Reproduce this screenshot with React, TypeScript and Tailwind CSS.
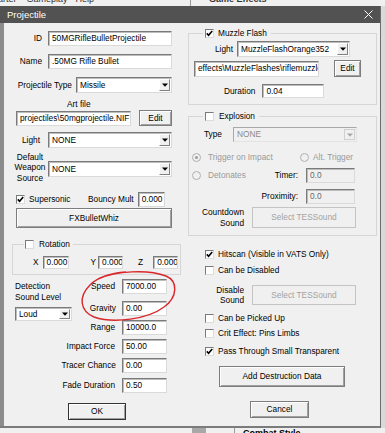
const sunken =
  "bg-white border border-t-[#7a7a7a] border-l-[#7a7a7a] border-r-[#dadada] border-b-[#dadada] shadow-[inset_1px_1px_0_#bdbdbd]";
const sunkenOff =
  "bg-[#f0f0f0] border border-t-[#a8a8a8] border-l-[#a8a8a8] border-r-[#e3e3e3] border-b-[#e3e3e3] text-[#8a8a8a]";
const raised =
  "bg-[#f0f0f0] border border-[#7d7d7d] shadow-[inset_1px_1px_0_#ffffff,inset_-1px_-1px_0_#a0a0a0] flex items-center justify-center";
const raisedOff =
  "bg-[#f0f0f0] border border-[#c4c4c4] text-[#a3a3a3] flex items-center justify-center";

function Field({ value, className }: { value: string; className: string }) {
  return (
    <div className={`${sunken} ${className} flex items-center pl-[3px] overflow-hidden whitespace-nowrap`}>
      {value}
    </div>
  );
}

function Arrow({ off }: { off?: boolean }) {
  return (
    <svg width="6" height="4" viewBox="0 0 6 4">
      <path d="M0 0.5h6L3 3.8z" fill={off ? "#a8a8a8" : "#000"} />
    </svg>
  );
}

function Select({ value, className, off }: { value: string; className: string; off?: boolean }) {
  return (
    <div className={`${off ? sunkenOff : sunken} ${className} flex items-stretch overflow-hidden whitespace-nowrap`}>
      <div className="flex-1 flex items-center pl-[3px]">{value}</div>
      <div
        className={`w-[11px] m-[1px] flex items-center justify-center bg-[#f0f0f0] ${
          off ? "border border-[#d0d0d0]" : "border border-t-white border-l-white border-r-[#808080] border-b-[#808080]"
        }`}
      >
        <Arrow off={off} />
      </div>
    </div>
  );
}

function Check({ on }: { on?: boolean }) {
  return (
    <div className="w-[9px] h-[9px] shrink-0 bg-white border border-t-[#7a7a7a] border-l-[#7a7a7a] border-r-[#dcdcdc] border-b-[#dcdcdc] flex items-center justify-center">
      {on && (
        <svg width="7" height="7" viewBox="0 0 7 7">
          <path d="M0.8 3.4l1.8 1.9L6.2 1.1" stroke="#000" strokeWidth="1.6" fill="none" />
        </svg>
      )}
    </div>
  );
}

function Radio({ on }: { on?: boolean }) {
  return (
    <div className="w-[9px] h-[9px] shrink-0 rounded-full bg-[#f0f0f0] border border-[#b0b0b0] flex items-center justify-center">
      {on && <div className="w-[3px] h-[3px] rounded-full bg-[#9a9a9a]" />}
    </div>
  );
}

export default function App() {
  return (
    <div className="w-[385px] h-[433px] overflow-hidden bg-[#d9d9d9] font-['Liberation_Sans',Arial,sans-serif] text-[8.3px] leading-none text-black relative">
      {/* app behind */}
      <div className="h-[6px] overflow-hidden bg-[#f0f0f0] flex text-[9px] text-[#333]">
        <span className="-mt-[5px] ml-[-2px]">arter</span>
        <span className="-mt-[5px] ml-[10px]">Gameplay</span>
        <span className="-mt-[5px] ml-[8px]">Help</span>
        <div className="ml-[96px] w-px bg-[#9a9a9a]" />
        <span className="-mt-[5px] ml-[18px] font-bold">Game Effects</span>
      </div>

      {/* dialog */}
      <div className="w-[381px] h-[422px] flex flex-col border-r border-r-[#6d6d6d] border-b-2 border-b-[#7b7b7b]">
        <div className="h-[17px] bg-[#525252] flex items-center justify-between text-white text-[9.5px] pl-[7px] pr-[7px]">
          <span>Projectile</span>
          <svg width="9" height="9" viewBox="0 0 9 9">
            <path d="M0.5 0.5l8 8M8.5 0.5l-8 8" stroke="#ffffff" strokeWidth="1" />
          </svg>
        </div>
        <div className="flex-1 flex bg-[#f0f0f0] border-l-4 border-l-[#8c8c8c] pl-[8px] pt-[6px] relative">
          {/* left column */}
          <div className="w-[169px] pt-[2px] flex flex-col">
            <div className="h-[15px] flex items-center">
              <span className="w-[36px] text-right pr-[6px]">ID</span>
              <Field value="50MGRifleBulletProjectile" className="w-[124px] h-[15px]" />
            </div>
            <div className="h-[15px] mt-[8px] flex items-center">
              <span className="w-[36px] text-right pr-[6px]">Name</span>
              <Field value=".50MG Rifle Bullet" className="w-[124px] h-[15px]" />
            </div>
            <div className="h-[16px] mt-[8px] flex items-center">
              <span className="w-[64px] text-right pr-[4px]">Projectile Type</span>
              <Select value="Missile" className="w-[96px] h-[16px]" />
            </div>
            <div className="h-[9px] mt-[7px] pl-[55px]">Art file</div>
            <div className="h-[16px] mt-[1px] pl-[4px] flex items-center">
              <Field value="projectiles\50mgprojectile.NIF" className="w-[115px] h-[15px]" />
              <div className={`${raised} ml-[8px] w-[33px] h-[16px]`}>Edit</div>
            </div>
            <div className="h-[16px] mt-[6px] flex items-center">
              <span className="w-[36px] text-right pr-[8px]">Light</span>
              <Select value="NONE" className="w-[124px] h-[16px]" />
            </div>
            <div className="h-[33px] mt-[3px] flex items-center">
              <span className="w-[36px] text-center leading-[10.5px]">
                Default
                <br />
                Weapon
                <br />
                Source
              </span>
              <Select value="NONE" className="w-[124px] h-[16px] mt-[3px]" />
            </div>
            <div className="h-[15px] mt-[8px] pl-[4px] flex items-center">
              <Check on />
              <span className="ml-[4px] w-[59px]">Supersonic</span>
              <span>Bouncy Mult</span>
              <Field value="0.000" className="ml-[4px] w-[27px] h-[15px]" />
            </div>
            <div className={`${raised} mt-[1px] ml-[4px] w-[156px] h-[20px]`}>FXBulletWhiz</div>

            <fieldset className="mt-[12px] w-[169px] border border-[#d6d6d6] p-0 pb-[5px] m-0">
              <legend className="ml-[11px] px-[1px] flex items-center">
                <Check />
                <span className="ml-[5px] pr-[2px]">Rotation</span>
              </legend>
              <div className="mt-[7px] h-[13px] flex items-center pl-[20px]">
                <span>X</span>
                <Field value="0.000" className="ml-[4px] w-[26px] h-[13px]" />
                <span className="ml-[22px]">Y</span>
                <Field value="0.000" className="ml-[2px] w-[25px] h-[13px]" />
                <span className="ml-[15px]">Z</span>
                <Field value="0.000" className="ml-[10px] w-[25px] h-[13px]" />
              </div>
            </fieldset>

            <div className="mt-[4px] flex">
              <div className="w-[68px] pl-[3px] pt-[2px]">
                <div className="leading-[10.5px]">
                  Detection
                  <br />
                  Sound Level
                </div>
                <Select value="Loud" className="mt-[5px] w-[57px] h-[14px]" />
              </div>
              <div className="flex flex-col">
                <div className="h-[15px] flex items-center">
                  <span className="w-[42px] text-right pr-[7px]">Speed</span>
                  <Field value="7000.00" className="w-[45px] h-[15px]" />
                </div>
                <div className="h-[15px] mt-[7px] flex items-center">
                  <span className="w-[42px] text-right pr-[6px]">Gravity</span>
                  <Field value="0.00" className="w-[45px] h-[15px]" />
                </div>
                <div className="h-[15px] mt-[4px] flex items-center">
                  <span className="w-[42px] text-right pr-[7px]">Range</span>
                  <Field value="10000.0" className="w-[45px] h-[15px]" />
                </div>
              </div>
            </div>
            <div className="h-[15px] mt-[4px] flex items-center">
              <span className="w-[110px] text-right pr-[7px]">Impact Force</span>
              <Field value="50.00" className="w-[45px] h-[15px]" />
            </div>
            <div className="h-[15px] mt-[4px] flex items-center">
              <span className="w-[110px] text-right pr-[6px]">Tracer Chance</span>
              <Field value="0.00" className="w-[45px] h-[15px]" />
            </div>
            <div className="h-[15px] mt-[5px] flex items-center">
              <span className="w-[110px] text-right pr-[7px]">Fade Duration</span>
              <Field value="0.50" className="w-[45px] h-[15px]" />
            </div>
            <div className={`${raised} !border-[#333] mt-[10px] ml-[56px] w-[58px] h-[17px]`}>OK</div>
          </div>

          {/* right column */}
          <div className="ml-[7px] w-[189px] flex flex-col">
            <fieldset className="border border-[#d6d6d6] p-0 m-0 pb-[6px]">
              <legend className="ml-[14px] px-[2px] flex items-center">
                <Check on />
                <span className="ml-[4px] pr-[2px]">Muzzle Flash</span>
              </legend>
              <div className="mt-[3px] h-[16px] pl-[26px] flex items-center">
                <span>Light</span>
                <Select value="MuzzleFlashOrange352" className="ml-[4px] w-[113px] h-[16px]" />
              </div>
              <div className="mt-[3px] h-[17px] pl-[5px] flex items-center">
                <Field value="effects\MuzzleFlashes\riflemuzzle.NIF" className="w-[125px] h-[16px]" />
                <div className={`${raised} ml-[15px] w-[27px] h-[17px]`}>Edit</div>
              </div>
              <div className="mt-[7px] h-[14px] pl-[35px] flex items-center">
                <span>Duration</span>
                <Field value="0.04" className="ml-[7px] w-[62px] h-[14px]" />
              </div>
            </fieldset>

            <fieldset className="mt-[7px] border border-[#d6d6d6] p-0 m-0 pb-[7px]">
              <legend className="ml-[14px] px-[2px] flex items-center">
                <Check />
                <span className="ml-[5px] pr-[2px]">Explosion</span>
              </legend>
              <div className="mt-[6px] h-[15px] pl-[15px] flex items-center">
                <span>Type</span>
                <Select off value="NONE" className="ml-[11px] w-[124px] h-[15px]" />
              </div>
              <div className="mt-[11px] h-[9px] pl-[3px] flex items-center text-[#9a9a9a]">
                <Radio on />
                <span className="ml-[7px] w-[92px]">Trigger on Impact</span>
                <Radio />
                <span className="ml-[4px]">Alt. Trigger</span>
              </div>
              <div className="mt-[6px] h-[15px] pl-[3px] flex items-center">
                <Radio />
                <span className="ml-[7px] w-[60px] text-[#9a9a9a]">Detonates</span>
                <span className="w-[30px] text-right">Timer:</span>
                <Field value="0.0" className="ml-[8px] w-[49px] h-[15px] !bg-[#f0f0f0] text-[#6a6a6a]" />
              </div>
              <div className="mt-[6px] h-[15px] flex items-center">
                <span className="w-[109px] text-right">Proximity:</span>
                <Field value="0.0" className="ml-[8px] w-[49px] h-[15px] !bg-[#f0f0f0] text-[#6a6a6a]" />
              </div>
              <div className="mt-[3px] h-[21px] flex items-center">
                <span className="w-[55px] text-right leading-[10.5px]">
                  Countdown
                  <br />
                  Sound
                </span>
                <div className={`${raisedOff} ml-[8px] w-[104px] h-[21px]`}>Select TESSound</div>
              </div>
            </fieldset>

            <div className="mt-[14px] h-[9px] pl-[17px] flex items-center">
              <Check on />
              <span className="ml-[4px]">Hitscan (Visible in VATS Only)</span>
            </div>
            <div className="mt-[7px] h-[9px] pl-[17px] flex items-center">
              <Check />
              <span className="ml-[4px]">Can be Disabled</span>
            </div>
            <div className="mt-[10px] h-[20px] flex items-center">
              <span className="w-[56px] text-right leading-[10.5px]">
                Disable
                <br />
                Sound
              </span>
              <div className={`${raisedOff} ml-[8px] w-[104px] h-[20px]`}>Select TESSound</div>
            </div>
            <div className="mt-[9px] h-[9px] pl-[17px] flex items-center">
              <Check />
              <span className="ml-[4px]">Can be Picked Up</span>
            </div>
            <div className="mt-[6px] h-[9px] pl-[17px] flex items-center">
              <Check />
              <span className="ml-[4px]">Crit Effect: Pins Limbs</span>
            </div>
            <div className="mt-[9px] h-[9px] pl-[17px] flex items-center">
              <Check on />
              <span className="ml-[4px]">Pass Through Small Transparent</span>
            </div>
            <div className={`${raised} mt-[10px] ml-[31px] w-[126px] h-[21px]`}>Add Destruction Data</div>
            <div className={`${raised} mt-[14px] ml-[62px] w-[59px] h-[17px]`}>Cancel</div>
          </div>

          {/* hand-drawn annotation */}
          <svg className="absolute left-[74px] top-[244px]" width="104" height="60" viewBox="0 0 104 60">
            <path
              d="M20 12 C38 4 70 2 88 9 C100 14 100 30 86 40 C70 52 36 57 16 50 C2 44 0 30 12 18 C20 10 34 6 48 5"
              stroke="#d8262a"
              strokeWidth="1.4"
              fill="none"
            />
          </svg>
        </div>
      </div>

      {/* app behind, below */}
      <div className="h-[5px] overflow-hidden flex bg-[#f0f0f0]">
        <div className="ml-[192px] w-[14px] bg-[#a8a8a8]" />
        <div className="ml-[28px] w-px bg-[#9a9a9a]" />
        <span className="ml-[8px] mt-[1px] font-bold text-[9px]">Combat Style</span>
      </div>
    </div>
  );
}
